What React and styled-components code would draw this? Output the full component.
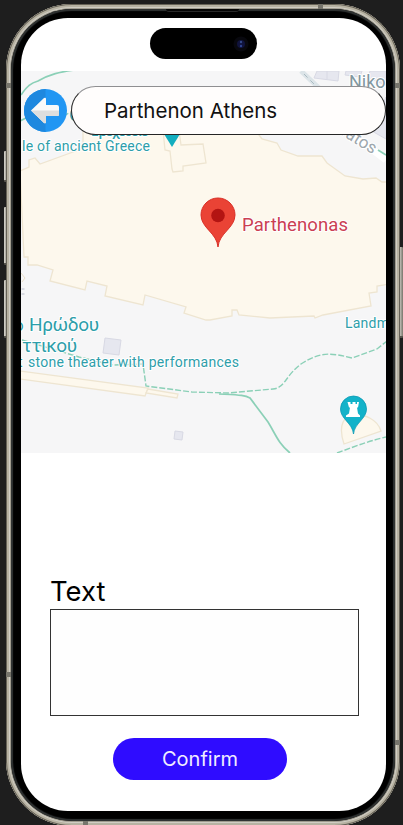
import React from "react";
import styled, { createGlobalStyle } from "styled-components";

const GlobalStyle = createGlobalStyle`
  * { box-sizing: border-box; }
  html, body { margin: 0; background: #1e1e1e; overflow: hidden; }
  body { font-family: Inter, "Liberation Sans", sans-serif; color: #000; }
`;

const Stage = styled.main`
  width: 403px;
  height: 825px;
  padding: 4px 3px 0 6px;
  background: #1e1e1e;
  position: relative;
  overflow: hidden;
`;

const SideButton = styled.i`
  position: absolute;
  left: ${(p) => (p.$right ? "399px" : "4px")};
  top: ${(p) => p.$top}px;
  width: 4px;
  height: ${(p) => p.$height}px;
  border-radius: 1px;
  background: linear-gradient(90deg, #dad8d0, #77746a);
  border-bottom: 2px solid #55534c;
`;

const Phone = styled.div`
  position: relative;
  width: 394px;
  height: 822px;
  padding: 5px;
  border-radius: 66px;
  background: #9f9b8e;
  box-shadow: inset 0 0 0 1px #666257, inset 0 0 0 3px #b7b2a2,
    inset 0 0 0 4px #d0cdc4;
`;

const Bezel = styled.div`
  width: 384px;
  height: 812px;
  padding: 9px 9px 10px 10px;
  border-radius: 61px;
  background: #000;
  box-shadow: inset 0 0 1px 2px #303333;
`;

const Antenna = styled.i`
  position: absolute;
  left: ${(p) => p.$x}px;
  top: ${(p) => p.$y}px;
  width: 5px;
  height: 5px;
  background: #77756c;
`;

const Speaker = styled.i`
  position: absolute;
  left: 160px;
  top: 5px;
  width: 73px;
  height: 3px;
  border-radius: 0 0 3px 3px;
  background: #050505;
  border-bottom: 1px solid #292929;
`;

const Screen = styled.div`
  width: 365px;
  height: 793px;
  border-radius: 47px;
  background: #fff;
  overflow: hidden;
  display: flex;
  flex-direction: column;
`;

const StatusBar = styled.header`
  height: 53px;
  padding-top: 10px;
  display: flex;
  justify-content: center;
`;

const Island = styled.div`
  width: 107px;
  height: 31px;
  margin-right: 1px;
  padding-right: 8px;
  border-radius: 16px;
  background: #000;
  display: flex;
  align-items: center;
  justify-content: flex-end;
`;

const MapSection = styled.section`
  position: relative;
  height: 382px;
`;

const MapDrawing = styled.svg`
  display: block;
  width: 365px;
  height: 382px;
  font-family: Roboto, sans-serif;
`;

const SearchBar = styled.div`
  position: absolute;
  top: 15px;
  left: 3px;
  right: 0;
  display: flex;
  align-items: center;
  gap: 4px;
`;

const BackButton = styled.button`
  width: 43px;
  height: 43px;
  border: 0;
  padding: 0;
  background: none;
  display: block;
`;

const SearchInput = styled.div`
  flex: 1;
  height: 49px;
  padding-left: 32px;
  border: 1px solid #252525;
  border-top-color: #8f8f91;
  border-radius: 25px;
  background: #fffdfc;
  color: #111;
  font-size: 20.5px;
  line-height: 48px;
`;

const Form = styled.section`
  padding: 120px 27px 0 29px;
  display: flex;
  flex-direction: column;
`;

const Label = styled.label`
  height: 36px;
  font-size: 27.4px;
  line-height: 36px;
`;

const TextArea = styled.textarea`
  width: 309px;
  height: 107px;
  padding: 8px;
  border: 1px solid #333;
  border-radius: 0;
  background: #fefefe;
  resize: none;
  outline: none;
`;

const ConfirmButton = styled.button`
  width: 174px;
  height: 42px;
  margin: 22px 0 0 63px;
  padding: 0;
  border: 0;
  border-radius: 21px;
  background: #2f0cff;
  color: #f1edff;
  font: 400 20px/42px Inter, sans-serif;
`;

const HALO = { stroke: "#fff", strokeWidth: 2, paintOrder: "stroke", strokeLinejoin: "round" };

function AthensMap() {
  return (
    <MapDrawing viewBox="21 71 365 382" aria-label="Map of the Parthenon">
      <rect x="21" y="71" width="365" height="382" fill="#f6f6f7" />
      <g fill="#e6e7ef" stroke="#d8d9e4">
        <path d="M317 71l-3 7 24 3 1-10zM327 71v8M346 71l-1 4 15 2 2-6zM370 71l-2 7 18 7V71zM370 130l5-7 11-26v42z" />
        <path d="M105 338l16 2-2 15-16-2zM175 431l8 1-1 8-8-1z" />
      </g>
      <path d="M301 71l18 17" stroke="#dce4e8" strokeWidth="5" />
      <path d="M304 74l13 13" stroke="#a9bac1" strokeDasharray="5 4" fill="none" />
      <path d="M336 122l50 38" stroke="#fff" strokeWidth="7" />
      <g fill="#fdf8ed" stroke="#eee5d1" strokeWidth="1.3">
        <path d="M20 171l9-4v-7l6-2 5 6 33-12 10-4V120h166l10 15 3 4 15 4 4 7 17 6h24l5 7 18 13 18 3 13-1 6 4h8v102l-13 2v6l-8 1 2 13-48 9-8 3-1-2-44 2-31-3-2-5h-5v6l-22 4h-4l-22-7 2-6-41-12-2 10-38-9 2-10-20-5-2 9-35-9 3-11-16-5h-9v-8h-4z" />
        <path d="M163 130l2 20 5 1 2 18 1 3 10-1v-5l23-3-3-19-22 1-2-15M20 371l128 17-3 8-125-17z" />
        <path d="M148 389l30 5-1 4-31-5zM344 444c-4-12-4-22 4-28 18-4 30 5 33 15z" />
      </g>
      <path d="M21 273l4 5-3 4" fill="none" stroke="#eadfc8" />
      <path d="M23 288v8" stroke="#d8dae1" strokeWidth="3" strokeDasharray="2 3" />
      <g fill="none" stroke="#8bd0b7" strokeWidth="1.7">
        <path d="M21 95c6-9 10-12 17-14 12-7 22-9 36-11M20 121l8-4M219 394c20 1 26 1 31 4l18 24c8 13 10 21 22 31M378 150l8 5" />
        <g strokeWidth="1.4" strokeDasharray="6 2">
          <path d="M22 340l57 17 34 8 30-1 3 22 46 6 36 1 45-4c12-1 12-13 28-25 20-13 30-11 51-6l25-9 10-8M337 453c14-5 28-11 49-16M63 116l10-5" />
        </g>
      </g>
      <path d="M164 134l8 13 8-13z" fill="#13aebf" />
      <g fill="#2e9eaa" fontSize="14" {...HALO}>
        <text x="69" y="121" fontSize="19">C</text>
        <text x="91" y="136" textLength="58" fontSize="15" fontWeight="500">Βροχουσιο</text>
        <text x="22" y="151" textLength="128">le of ancient Greece</text>
        <text x="28" y="367" textLength="211">stone theater with performances</text>
        <text x="345" y="328" textLength="64">Landmark</text>
        <text x="29" y="331" fontSize="19" textLength="70">Ηρώδου</text>
        <text x="14" y="331" fontSize="17">ο</text>
        <text x="22" y="352" fontSize="19" textLength="55">ττικού</text>
        <text x="18" y="367">t</text>
      </g>
      <g fill="#8297a0" fontSize="18" {...HALO}>
        <text x="349" y="88">Niko</text>
        <text x="340" y="134" fontSize="17" transform="rotate(32 340 134)" fill="#9da7ad">ratos</text>
      </g>
      <text x="242" y="231" fontSize="18.5" textLength="106" fill="#cb4053" {...HALO}>Parthenonas</text>
      <path d="M218 247c-1-14-17-19-17-32a17 17 0 0134 0c0 13-16 18-17 32z" fill="#ea4335" stroke="#d93027" />
      <circle cx="218" cy="215.5" r="6.8" fill="#b31412" />
      <path d="M353.500 434c-1-11-13-15-13-25a13 13 0 0126 0c0 10-12 14-13 25z" fill="#13b2c9" stroke="#0999b4" strokeWidth=".8" />
      <path d="M347.500 402h3v2h2v-2h3v2h1.500v-2h2l-1 5.500h-1l1 6 2 2v1.500h-14v-1.500l3-2 1-6h-1z" fill="#fff" />
    </MapDrawing>
  );
}

function BackArrow() {
  return (
    <svg width="43" height="43" viewBox="0 0 43 43" aria-hidden="true">
      <circle cx="21.500" cy="21.500" r="21.500" fill="#2196f3" />
      <path d="M21.500 0a21.500 21.500 0 000 43z" fill="#1e88df" />
      <path d="M7 21.500L20 9q2-1 2 1v6h11q2 0 2 2v8q0 1-2 1H22v6q0 2-2 1z" fill="#fafafa" />
      <path d="M7 21.500h28V26q0 1-2 1H22v6q0 2-2 1z" fill="#dedede" />
    </svg>
  );
}

function CameraLens() {
  return (
    <svg width="16" height="16" viewBox="0 0 16 16" aria-hidden="true">
      <circle cx="8" cy="8" r="7.500" fill="#08080e" />
      <circle cx="8" cy="8" r="4" fill="#10133c" />
      <circle cx="8" cy="6" r="1.200" fill="#334889" />
      <circle cx="8" cy="10" r="1.200" fill="#2e4491" />
    </svg>
  );
}

export default function App() {
  return (
    <>
      <GlobalStyle />
      <Stage>
        <SideButton $top={151} $height={31} />
        <SideButton $top={207} $height={58} />
        <SideButton $top={280} $height={58} />
        <SideButton $right $top={247} $height={91} />
        <Phone>
          <Antenna $x={312} $y={0} />
          <Antenna $x={0} $y={79} />
          <Antenna $x={389} $y={79} />
          <Antenna $x={0} $y={668} />
          <Antenna $x={389} $y={736} />
          <Antenna $x={77} $y={817} />
          <Bezel>
            <Screen>
              <StatusBar>
                <Island><CameraLens /></Island>
              </StatusBar>
              <MapSection>
                <AthensMap />
                <SearchBar>
                  <BackButton aria-label="Back"><BackArrow /></BackButton>
                  <SearchInput>Parthenon Athens</SearchInput>
                </SearchBar>
              </MapSection>
              <Form>
                <Label htmlFor="note">Text</Label>
                <TextArea id="note" />
                <ConfirmButton>Confirm</ConfirmButton>
              </Form>
            </Screen>
          </Bezel>
          <Speaker />
        </Phone>
      </Stage>
    </>
  );
}
